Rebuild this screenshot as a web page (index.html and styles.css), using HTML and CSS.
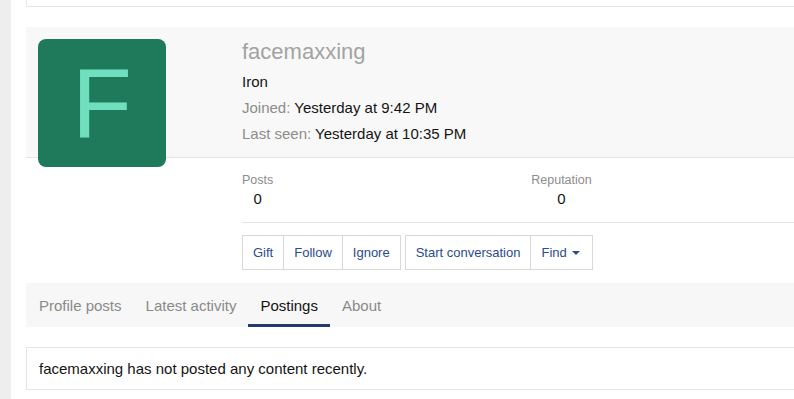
FILE: index.html
```html
<!DOCTYPE html>
<html lang="en">
<head>
  <meta charset="UTF-8" />
  <meta name="viewport" content="width=device-width, initial-scale=1" />
  <title>facemaxxing | Member profile</title>
  <link rel="stylesheet" href="styles.css">
</head>
<body>
  <div class="layout">
    <div class="side-strip"></div>

    <div class="page">
      <div class="top-block"></div>

      <div class="member-header">
        <div class="avatar">F</div>

        <div class="member-main">
          <h1 class="username">facemaxxing</h1>
          <div class="line">Iron</div>
          <div class="line"><span class="label">Joined:</span> Yesterday at 9:42 PM</div>
          <div class="line"><span class="label">Last seen:</span> Yesterday at 10:35 PM</div>
        </div>
      </div>

      <div class="member-content">
        <div class="stats">
          <dl class="stat">
            <dt>Posts</dt>
            <dd>0</dd>
          </dl>
          <dl class="stat">
            <dt>Reputation</dt>
            <dd>0</dd>
          </dl>
        </div>

        <div class="buttons">
          <div class="btn-group">
            <a class="btn" href="#">Gift</a>
            <a class="btn" href="#">Follow</a>
            <a class="btn" href="#">Ignore</a>
          </div>
          <div class="btn-group">
            <a class="btn" href="#">Start conversation</a>
            <a class="btn btn-menu" href="#">Find <span class="caret"></span></a>
          </div>
        </div>
      </div>

      <div class="tabs">
        <a class="tab" href="#">Profile posts</a>
        <a class="tab" href="#">Latest activity</a>
        <a class="tab active" href="#">Postings</a>
        <a class="tab" href="#">About</a>
      </div>

      <div class="block-body">
        facemaxxing has not posted any content recently.
      </div>
    </div>
  </div>
</body>
</html>
```

FILE: styles.css
```css
body {
  font-family: "Liberation Sans", Arial, sans-serif;
  font-size: 15px;
  color: #141414;
  background-color: white;
  margin: 0;
  overflow: hidden;
}
a {
  text-decoration: none;
}
.layout {
  display: flex;
  min-height: 399px;
}
.side-strip {
  width: 11px;
  flex-shrink: 0;
  background-color: #eeeeee;
}
.page {
  flex: 1;
  padding-left: 15px;
  margin-right: -30px;
}
.top-block {
  height: 6px;
  border: 1px solid #e5e5e5;
  border-top: none;
}
.member-header {
  position: relative;
  margin-top: 20px;
  padding: 12px 0 10px 216px;
  background-color: #f8f8f8;
  border-bottom: 1px solid #e5e5e5;
}
.avatar {
  position: absolute;
  left: 12px;
  top: 12px;
  width: 128px;
  height: 128px;
  border-radius: 8px;
  background-color: #1f7a5c;
  color: #70dfbd;
  font-size: 98px;
  line-height: 1;
  display: flex;
  align-items: center;
  justify-content: center;
}
.username {
  margin: 0 0 4px;
  font-size: 22px;
  font-weight: normal;
  line-height: 26px;
  color: #a3a3a3;
}
.line {
  line-height: 26px;
}
.label {
  color: #8c8c8c;
}
.member-content {
  margin-left: 216px;
  padding-bottom: 13px;
}
.stats {
  display: flex;
  gap: 258px;
  padding: 14px 0 12px;
  border-bottom: 1px solid #e5e5e5;
}
.stat {
  margin: 0;
  text-align: center;
}
.stat dt {
  font-size: 12.5px;
  line-height: 16px;
  color: #8c8c8c;
}
.stat dd {
  margin: 0;
  font-size: 15px;
  line-height: 22px;
}
.buttons {
  display: flex;
  gap: 4px;
  margin-top: 12px;
}
.btn-group {
  display: flex;
}
.btn {
  display: flex;
  align-items: center;
  gap: 5px;
  height: 33px;
  padding: 0 10px;
  font-size: 13px;
  color: #2b4b8c;
  background-color: white;
  border: 1px solid #d8d8d8;
}
.btn + .btn {
  border-left: none;
}
.btn-menu {
  padding-right: 12px;
}
.caret {
  width: 0;
  height: 0;
  border-left: 4px solid transparent;
  border-right: 4px solid transparent;
  border-top: 4px solid #2b4b8c;
}
.tabs {
  display: flex;
  height: 44px;
  background-color: #f7f7f7;
}
.tab {
  display: flex;
  align-items: center;
  padding: 3px 12px 0;
  color: #8a8a8a;
  border-bottom: 3px solid transparent;
}
.tab:first-child {
  padding-left: 13px;
}
.tab.active {
  color: #141414;
  border-bottom-color: #253a6e;
}
.block-body {
  margin-top: 20px;
  padding: 10px 12px;
  line-height: 21px;
  border: 1px solid #e5e5e5;
}
```
